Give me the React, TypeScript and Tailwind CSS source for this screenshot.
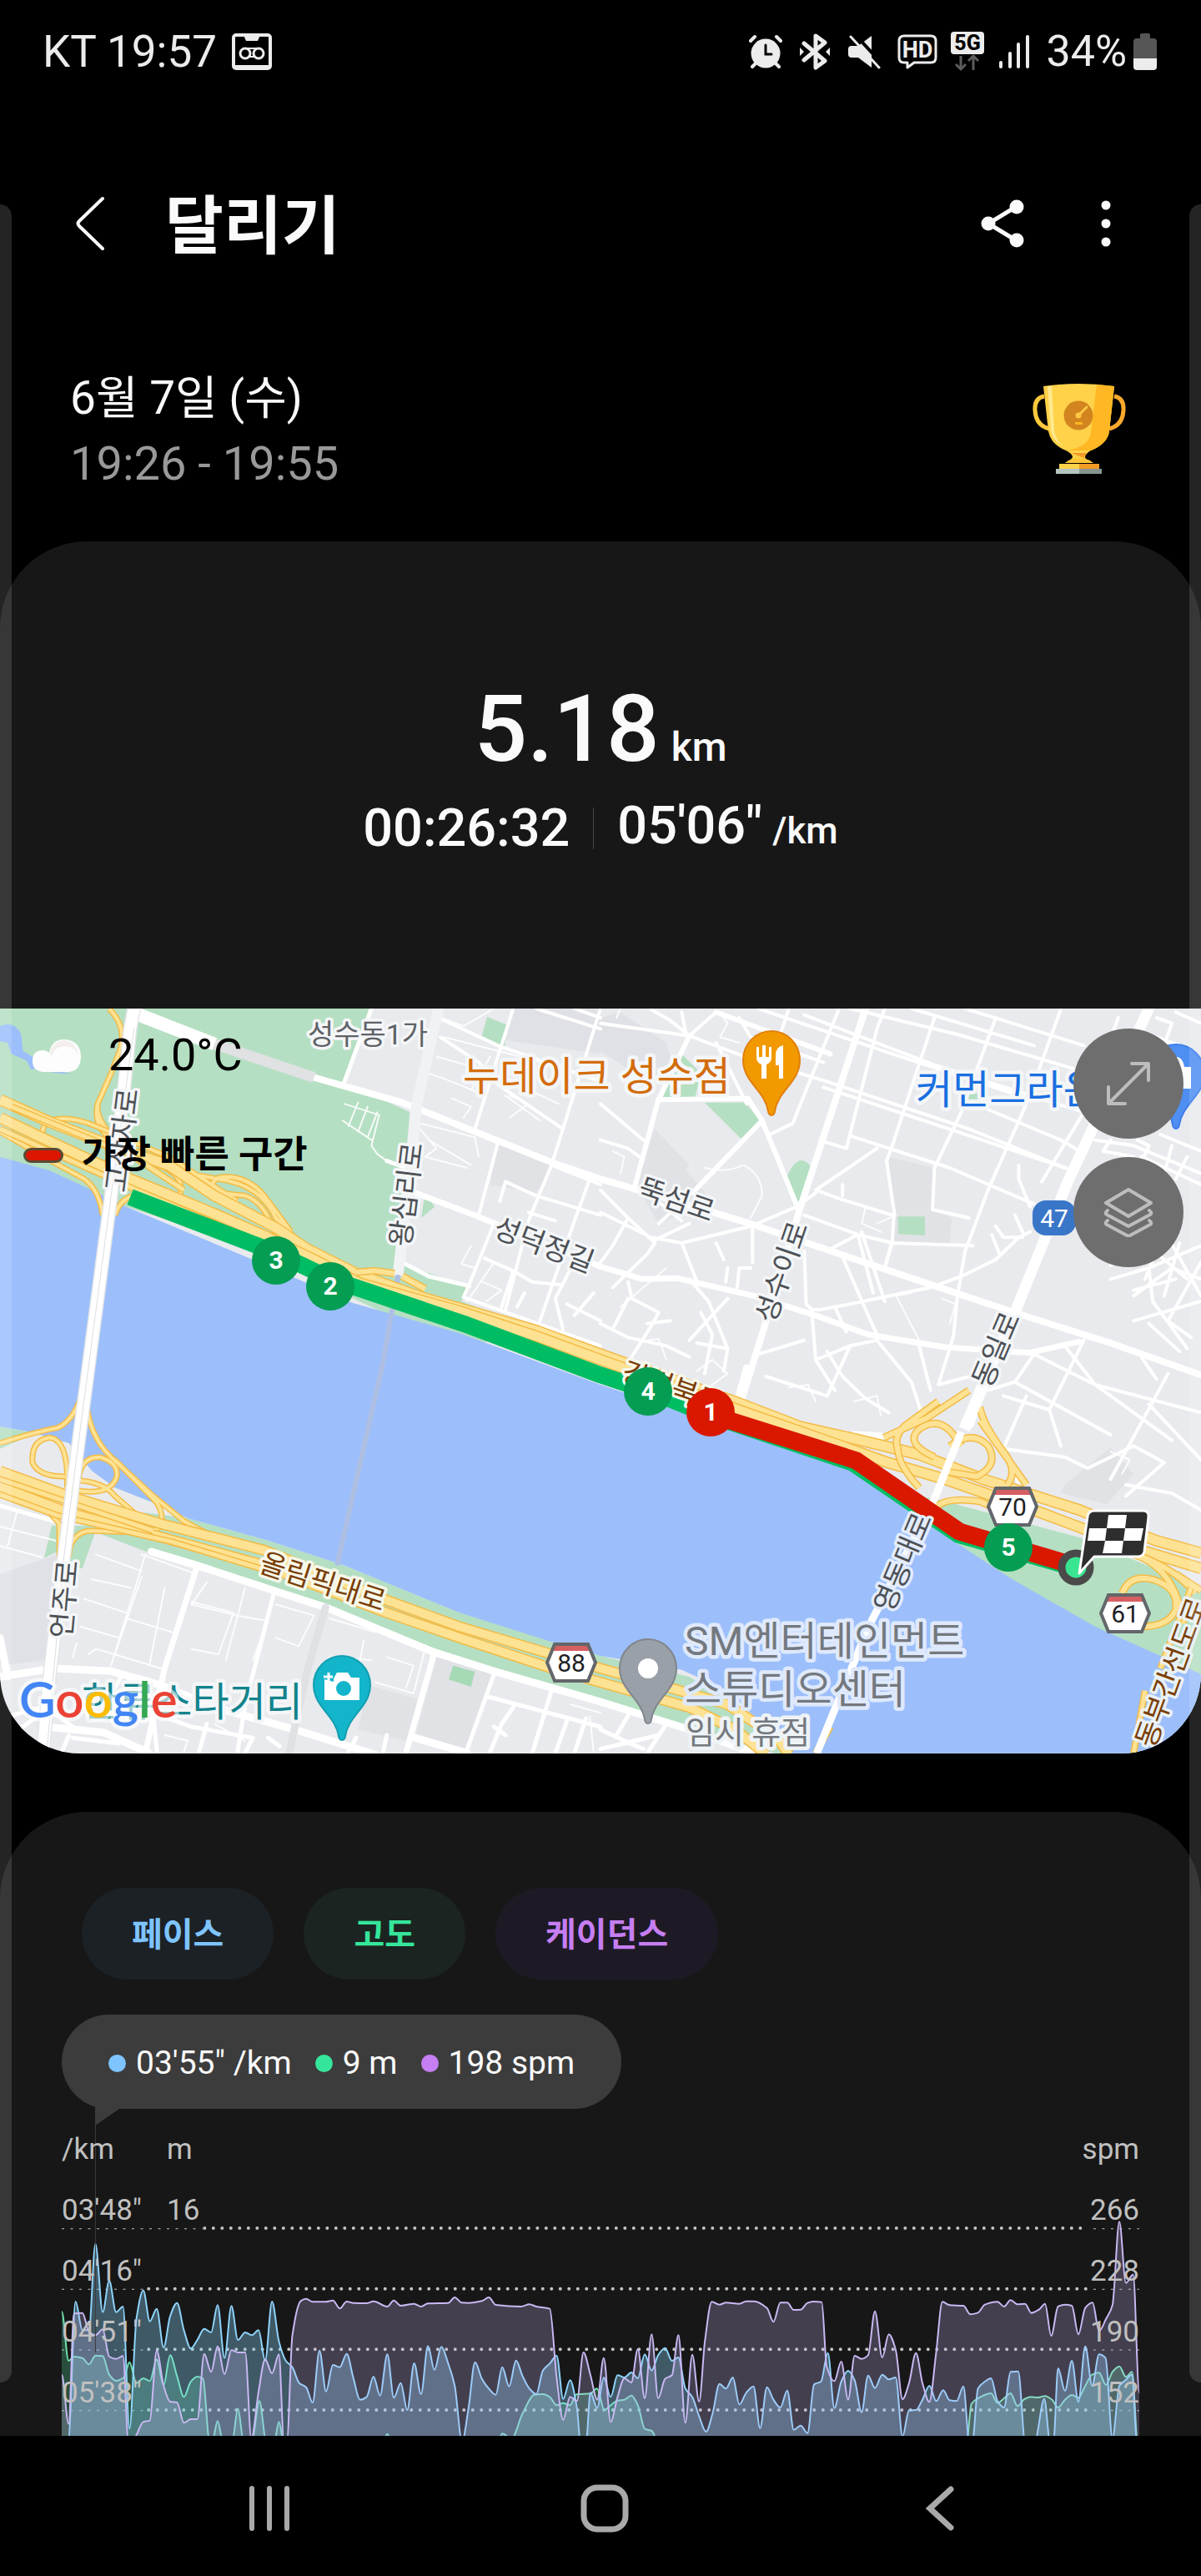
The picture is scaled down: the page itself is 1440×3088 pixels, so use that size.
import type { ReactNode } from "react";

type Point = [number, number];

/* ---------- chart data (x, y in plot units, y grows downwards) ---------- */

const R = 1568;

const pace: Point[] = [
  [161, 1160], [179, 1150], [197, 657], [215, 760], [232, 760], [249, 449], [268, 695], [285, 582], [303, 695], [321, 675],
  [338, 1115], [356, 720], [374, 617], [391, 728], [409, 683], [427, 822], [444, 710], [462, 662], [480, 760], [498, 826],
  [515, 795], [533, 755], [551, 768], [568, 670], [586, 860], [604, 673], [621, 795], [640, 768], [657, 778], [675, 760],
  [692, 870], [710, 657], [728, 800], [746, 870], [763, 893], [781, 950], [799, 965], [816, 1020], [834, 833], [851, 980],
  [869, 885], [887, 893], [905, 845], [922, 930], [940, 1010], [957, 1000], [975, 927], [992, 995], [1011, 847], [1028, 1003],
  [1046, 950], [1063, 1047], [1081, 879], [1099, 990], [1117, 817], [1134, 903], [1152, 820], [1170, 880], [1187, 960], [1206, 1160],
  [1223, 1040], [1240, 875], [1258, 935], [1276, 970], [1294, 992], [1311, 893], [1329, 962], [1347, 869], [1364, 925], [1382, 970],
  [1400, 990], [1417, 905], [1435, 880], [1453, 852], [1470, 1007], [1488, 940], [1506, 1040], [1515, 1160], [1530, 1160], [1541, 985],
  [1559, 1040], [R + 8, 930], [R + 26, 1000], [R + 44, 922], [R + 62, 930], [R + 80, 912], [R + 97, 933], [R + 115, 847],
  [R + 133, 905], [R + 150, 850], [R + 168, 824], [R + 186, 870], [R + 203, 858], [R + 221, 970], [R + 239, 1000], [R + 257, 1070],
  [R + 275, 1125], [R + 292, 1060], [R + 310, 953], [R + 327, 970], [R + 345, 930], [R + 362, 1027], [R + 380, 985], [R + 399, 962],
  [R + 416, 1112], [R + 434, 965], [R + 451, 1010], [R + 469, 1038], [R + 487, 977], [R + 504, 1118], [R + 522, 1103], [R + 540, 1130],
  [R + 557, 955], [R + 575, 945], [R + 593, 842], [R + 610, 1040], [R + 628, 945], [R + 646, 906], [R + 663, 940], [R + 681, 1055],
  [R + 698, 923], [R + 716, 968], [R + 735, 920], [R + 752, 937], [R + 770, 930], [R + 788, 1142], [R + 805, 1048], [R + 823, 1047],
  [R + 840, 1010], [R + 858, 960], [R + 876, 1015], [R + 894, 976], [R + 911, 1012], [R + 929, 1015], [R + 947, 962], [R + 962, 1160],
  [R + 970, 1160], [R + 985, 970], [R + 1003, 945], [R + 1019, 933], [R + 1036, 1015], [R + 1053, 1038], [R + 1070, 910], [R + 1090, 908],
  [R + 1108, 1160], [R + 1133, 1160], [R + 1158, 1007], [R + 1173, 1160], [R + 1182, 1160], [R + 1194, 897], [R + 1212, 978], [R + 1230, 870],
  [R + 1247, 1018], [R + 1265, 818], [R + 1283, 960], [R + 1301, 847], [R + 1318, 860], [R + 1336, 1150], [R + 1354, 960], [R + 1370, 940],
  [R + 1387, 920], [R + 1400, 1160],
];

const elevation: Point[] = [
  [161, 693], [179, 870], [193, 855], [215, 860], [232, 883], [249, 852], [268, 853], [285, 920], [303, 942], [323, 930],
  [338, 875], [356, 950], [374, 933], [391, 943], [409, 865], [427, 958], [444, 850], [462, 925], [480, 1000], [498, 945],
  [515, 927], [530, 935], [547, 1160], [554, 1160], [568, 1087], [582, 1160], [606, 1160], [621, 1042], [636, 1160], [657, 1160],
  [677, 1015], [695, 1160], [716, 1160], [728, 1090], [740, 1160], [1000, 1160], [1011, 1133], [1022, 1160], [1300, 1160], [1311, 1132],
  [1335, 1150], [1364, 1060], [1395, 992], [1417, 990], [1435, 1000], [1453, 1030], [1470, 1022], [1488, 1030], [1506, 990], [1541, 988],
  [1558, 970], [R + 10, 1047], [R + 26, 1030], [R + 44, 1013], [R + 62, 1010], [R + 80, 995], [R + 97, 1030], [R + 115, 1115],
  [R + 133, 1122], [R + 150, 1160], [R + 955, 1160], [R + 968, 1025], [R + 985, 1005], [R + 1019, 987], [R + 1036, 1022], [R + 1053, 1005],
  [R + 1070, 987], [R + 1088, 1033], [R + 1106, 1008], [R + 1124, 1000], [R + 1140, 1002], [R + 1160, 997], [R + 1178, 1010], [R + 1194, 1038],
  [R + 1212, 1010], [R + 1230, 993], [R + 1247, 1003], [R + 1265, 960], [R + 1283, 920], [R + 1301, 913], [R + 1319, 957], [R + 1336, 910],
  [R + 1354, 890], [R + 1371, 928], [R + 1387, 910], [R + 1402, 1160],
];

const cadence: Point[] = [
  [161, 920], [179, 1097], [193, 700], [215, 698], [232, 765], [249, 778], [268, 757], [285, 855], [303, 863], [321, 853],
  [335, 1160], [350, 1150], [374, 1090], [391, 1085], [409, 833], [427, 960], [444, 1017], [462, 1020], [480, 1093], [498, 1080],
  [515, 1080], [533, 845], [551, 910], [568, 818], [586, 918], [604, 832], [621, 840], [640, 840], [656, 1150], [675, 980],
  [692, 865], [710, 915], [728, 847], [741, 1155], [749, 1155], [763, 780], [785, 655], [799, 647], [816, 658], [850, 658],
  [869, 653], [887, 682], [905, 657], [922, 662], [957, 663], [975, 656], [1011, 675], [1028, 653], [1046, 672], [1081, 665],
  [1099, 675], [1117, 664], [1170, 662], [1187, 642], [1205, 661], [1223, 662], [1258, 655], [1276, 642], [1294, 669], [1360, 675],
  [1382, 667], [1400, 675], [1435, 683], [1453, 930], [1470, 1083], [1488, 1000], [1506, 1015], [1523, 840], [1541, 920], [1559, 1010],
  [R + 8, 860], [R + 26, 1090], [R + 44, 1000], [R + 62, 933], [R + 80, 948], [R + 97, 828], [R + 115, 1005], [R + 133, 775],
  [R + 150, 1005], [R + 168, 935], [R + 186, 922], [R + 203, 778], [R + 221, 1093], [R + 239, 848], [R + 257, 1017], [R + 272, 800],
  [R + 290, 658], [R + 310, 668], [R + 327, 661], [R + 362, 665], [R + 380, 656], [R + 400, 656], [R + 434, 680], [R + 451, 730],
  [R + 469, 661], [R + 487, 661], [R + 504, 687], [R + 522, 686], [R + 540, 662], [R + 555, 657], [R + 577, 659], [R + 590, 890],
  [R + 610, 943], [R + 628, 873], [R + 646, 1010], [R + 663, 852], [R + 681, 863], [R + 698, 850], [R + 716, 692], [R + 735, 858],
  [R + 752, 775], [R + 770, 830], [R + 788, 1008], [R + 805, 950], [R + 823, 842], [R + 840, 950], [R + 858, 1018], [R + 875, 850],
  [R + 892, 658], [R + 911, 670], [R + 947, 672], [R + 965, 703], [R + 985, 697], [R + 1003, 668], [R + 1036, 658], [R + 1053, 675],
  [R + 1070, 652], [R + 1088, 667], [R + 1108, 665], [R + 1124, 698], [R + 1145, 685], [R + 1160, 665], [R + 1176, 780], [R + 1194, 675],
  [R + 1212, 668], [R + 1230, 672], [R + 1247, 775], [R + 1265, 680], [R + 1284, 661], [R + 1301, 763], [R + 1319, 720], [R + 1336, 670],
  [R + 1354, 370], [R + 1371, 590], [R + 1390, 560], [R + 1406, 985],
];

/* Monotone cubic curve through the points: peaks stay where the data puts them. */
function curve(points: Point[]): string {
  const slope = (i: number) => (points[i + 1][1] - points[i][1]) / (points[i + 1][0] - points[i][0]);
  const tangent = (i: number) => {
    if (i === 0 || i === points.length - 1) return 0;
    const a = slope(i - 1);
    const b = slope(i);
    return a * b <= 0 ? 0 : (2 * a * b) / (a + b);
  };
  let d = `M${points[0][0]} ${points[0][1]}`;
  for (let i = 0; i < points.length - 1; i++) {
    const [x0, y0] = points[i];
    const [x1, y1] = points[i + 1];
    const h = (x1 - x0) / 3;
    d += `C${x0 + h} ${y0 + tangent(i) * h} ${x1 - h} ${y1 - tangent(i + 1) * h} ${x1} ${y1}`;
  }
  return d;
}

function Series({ points, line, fill, opacity }: { points: Point[]; line: string; fill: string; opacity: number }) {
  const d = curve(points);
  return (
    <>
      <path d={`${d}V1200H161Z`} fill={fill} fillOpacity={opacity} />
      <path d={d} fill="none" stroke={line} strokeWidth="2" vectorEffect="non-scaling-stroke" />
    </>
  );
}

function PlotArea() {
  const rows = [393, 611, 829, 1047];
  return (
    <svg viewBox="161 0 2813 1140" preserveAspectRatio="none" className="absolute inset-0 h-full w-full" aria-hidden="true">
      <g stroke="#c4c4c4" fill="none">
        {rows.map((y, i) => {
          const left = i === 0 ? 528 : 382;
          return (
            <g key={y}>
              <path d={`M161 ${y + 2}H${left}`} strokeWidth="1" strokeDasharray="3 7.5" vectorEffect="non-scaling-stroke" />
              <path d={`M${left + 6} ${y}H2840`} strokeWidth="4" strokeLinecap="round" strokeDasharray="0 10.5" vectorEffect="non-scaling-stroke" />
              <path d={`M2854 ${y + 2}H2974`} strokeWidth="1" strokeDasharray="3 7.5" vectorEffect="non-scaling-stroke" />
            </g>
          );
        })}
      </g>
      <Series points={elevation} line="#6fe3ac" fill="#5fe0a0" opacity={0.28} />
      <Series points={pace} line="#8fd3fb" fill="#89d3f8" opacity={0.35} />
      <Series points={cadence} line="#c9b8f2" fill="#c9b6f5" opacity={0.25} />
      <path d="M249 0V840" stroke="#3c3c3c" strokeWidth="1" vectorEffect="non-scaling-stroke" />
    </svg>
  );
}

/* ---------- map ---------- */

function Roads({ d, w, color = "#ffffff", cap = "round" }: { d: string; w: number; color?: string; cap?: "round" | "butt" }) {
  return <path d={d} fill="none" stroke={color} strokeWidth={w} strokeLinejoin="round" strokeLinecap={cap} vectorEffect="non-scaling-stroke" />;
}

function Cased({ d, w, line = "#f3bb45", color = "#fde293" }: { d: string; w: number; line?: string; color?: string }) {
  return (
    <>
      <Roads d={d} w={w + 3} color={line} cap="butt" />
      <Roads d={d} w={w} color={color} cap="butt" />
    </>
  );
}

function Terrain() {
  return (
    <g transform="scale(0.45918 0.33333) translate(0 -27)">
      <rect x="0" y="27" width="3136" height="2680" fill="#e8eaed" />
      <g fill="#e0e2e6">
        <path d="M1345 27H1568V190L1320 140ZM1300 510L1445 590L1400 690L1280 660ZM1568 60L1620 40L1740 150L1760 250L1700 300L1568 180ZM1710 460L1800 590L1790 610L1860 720L1720 800L1660 660ZM2320 560L2440 600L2440 750L2485 780L2480 880L2335 865Z" />
        <path d="M0 2060L150 1990L120 2370L0 2390ZM1140 2360L1285 2420L1225 2690L1085 2640ZM960 2460L1090 2510L1060 2660L935 2620ZM2900 1605L2960 1700L2890 1810L2770 1770L2780 1740Z" />
      </g>
      <g fill="#b5dfc2">
        <path d="M0 27H965L898 290L1070 400L1035 940L1225 1025L1205 1080L1400 1180L1200 1250L600 860L330 740L240 690L0 570Z" />
        <path d="M1272 57L1322 85L1318 165L1258 125ZM1780 190L1830 260L1815 345L1730 345ZM1840 365H1945L1985 430L1935 495ZM2055 630Q2075 570 2095 573Q2115 580 2120 610L2090 720H2080ZM2530 320L2580 350L2520 355Z" />
        <path d="M2345 775H2415V843L2345 838ZM1110 690L1135 740L1100 780Z" />
        <path d="M2400 1780L2470 1800L2820 1930L3136 2110V2450L2638 2095L2380 1850L2200 1680L2240 1640Z" />
        <path d="M0 1530L90 1555L0 1610ZM135 1887H255L215 2040H185L180 1960L115 2003Z" />
        <path d="M380 1840L490 1860L700 1940L900 2030L1200 2200L1568 2355L1800 2430L1960 2560L2060 2720L1960 2680L1568 2520L1130 2340L860 2190L680 2090L400 1990L250 1910Z" />
        <path d="M1183 2390L1240 2412L1230 2466L1172 2440Z" fill="#a6d9b5" />
      </g>
      <path
        d="M0 560L130 610L240 680L330 740L660 930L920 1085L1200 1195L1568 1380L1908 1535L2218 1680L2388 1850L2638 2075L2860 2250L3136 2420V2705H2060L1990 2600L1900 2480L1780 2405L1568 2355L1430 2300L1200 2200L900 2030L700 1940L490 1860L420 1815L300 1750L240 1690L180 1590L80 1550L0 1530Z"
        fill="#9cbffb"
      />
      <path d="M0 90Q40 70 55 120L60 180L85 200L95 250L190 265L120 240L80 245L70 215L30 190L20 150L0 145Z" fill="#9cbffb" />

      {/* lanes and alleys */}
      <g opacity="0.9">
        <Roads
          w={2}
          d="M1150 60L1210 90L1290 27M1160 130L1330 190L1470 240M1120 260L1180 290L1250 330M1140 200L1270 250M1330 340L1380 370L1330 420M1320 340L1410 430M1350 300L1460 370M1280 200L1230 320M1180 350L1230 380L1210 420M1100 440L1240 490L1250 560M1120 500L1230 590M1090 450L1140 530L1110 560L1220 600M900 370L990 410L970 520M895 430L970 500M935 365L910 450M960 380L935 470M985 400L960 490M970 520L985 550L1010 575M1260 1010L1310 1040L1270 1080M1290 940L1220 1080M1230 880L1205 945L1240 960"
        />
        <Roads
          w={2}
          d="M1740 960L1620 1100M1610 60L1620 27M1880 40L1900 80L1880 130L1930 150M1600 540L1630 560L1620 620M1840 600Q1900 620 1940 590Q1990 620 1990 700L1960 780M2260 740L2250 800L2300 830M2290 800L2340 770M2380 1050L2340 1060L2400 1220M2460 1070L2495 1090L2480 1160M1690 1220L1720 1215L1740 1290M1820 1330L1860 1290L1900 1340L1840 1400M2060 1390L2110 1380L2130 1440M2230 1440L2290 1420L2300 1490M2900 1620L2950 1650L2930 1700"
        />
        <Roads
          w={2}
          d="M380 1990L290 2390M370 1990L510 2060M250 1990L370 2050M240 2080L340 2110M220 2150L330 2200M210 2250L310 2290M370 2070L300 2350L420 2400M430 2110L390 2390M540 2090L500 2170L620 2210L700 2230M640 2110L590 2370M500 2160L610 2200L570 2350L500 2330M330 2220L450 2270M700 2230L660 2370M720 2170L820 2210L780 2320L720 2290M860 2220L980 2270M990 2270L1110 2330L1080 2490L980 2450M860 2360L970 2370M950 2300L930 2440M1010 2360L1080 2390L1060 2470"
        />
        <Roads w={2} d="M0 1890L145 1940M0 1960L110 2000M45 1835L20 1960M190 2360L200 2310M230 2350L250 2330L300 2350M640 2660L560 2600M430 2640L490 2660L480 2700M1490 2530L1568 2560M1540 2570L1550 2700" />
      </g>

      {/* side streets */}
      <Roads
        w={4}
        d="M1145 60L1300 160L1568 290M1150 130L1250 220L1300 300L1470 460M1340 27L1300 200L1240 460M1400 27L1568 100M1568 27L1470 460L1440 590L1380 790L1320 1110M1300 510L1250 770M1440 590L1568 660M1540 640L1500 790L1410 1150M1320 650L1400 700L1568 770M1320 650L1305 720M1380 760L1450 790M1290 800L1225 1020L1210 1065L1568 1240M1265 925L1340 970L1390 1010L1460 1020M1510 910L1450 1070L1470 1180M1480 1090L1568 1150M1340 970L1310 1100M1550 1050L1500 1130M1370 1050L1350 1100"
      />
      <Roads
        w={4}
        d="M1568 80L1800 125L1935 195L2160 290L2530 460L2800 610M1700 30L1750 70L1800 125L1870 40M1780 40L1790 110M1930 60L1960 130L2150 220M1980 27L2330 190L2640 330M2100 50L2440 230L2830 400M2220 27L2500 120L2820 250M2380 27L2700 160M2520 27L2830 160M2150 310L2500 470L2780 600M2220 485L2480 600L2700 730M2580 390L2770 500L2820 540M2150 505L2210 530L2290 100L2310 27M2260 50L2140 510M2440 60L2330 520L2315 575L2335 760L2330 860L2310 960M2600 60L2510 400L2440 600L2435 750L2530 780M2770 30L2680 370L2580 680L2520 900L2500 1060M2920 60L2830 400L2720 650M2660 590L2660 640L2690 740M1870 150L1950 370M2060 27L2030 150L1990 330M2190 30L2070 440L2010 480M1568 500L1640 530L1680 570M1568 370L1680 500M2130 680L2190 710L2330 770M2130 680L2290 530M2200 660L2200 700"
      />
      <Roads
        w={4}
        d="M1568 760L1700 850L1780 870L1960 810L2080 740L2130 690M1700 700L1780 790M1760 750L1720 800M1710 860L1800 800M1780 870L1820 1010M1870 870L1890 930M1965 820L1965 940M1568 680L1640 780L1710 870L1690 910L1600 1030M1640 780L1600 880L1568 940M1900 960L1895 1010M1930 960L1925 1030M1930 960H1960M1800 1000L1850 1080L1900 1250M1640 1010L1650 1070L1720 1120L1700 1170L1640 1300M1600 1180L1640 1070M1690 1160L1750 1150M1568 1160L1640 1210L1740 1240L1800 1280M1830 1120L1860 1200L1840 1340M1900 1070L1800 1220M1820 1230L1900 1250L1890 1330"
      />
      <Roads
        w={4}
        d="M2100 770L2240 840L2330 870L2540 880M2240 840L2170 890M2200 920L2270 1140L2290 1200M2240 840L2280 1050M2250 830L2310 1080M2100 900L2105 1090L2120 1110L2140 1110L2220 1090L2430 1030L2510 990L2600 930L2660 850L2690 830M2500 1060L2490 1200L2480 1250M2310 960L2330 870M2600 810L2620 850L2670 850M2590 840L2610 910M2650 770L2670 830M2120 1120L2130 1290L2220 1240L2290 1220M2130 1290L2180 1400M2160 1260L2200 1350L2260 1430L2320 1480M1980 1270L2100 1220M2290 1220L2380 1370L2410 1500M2400 1240L2430 1400M2480 1250L2450 1380L2560 1340M2220 1240L2160 1420L2000 1350M2180 1100L2210 1190"
      />
      <Roads
        w={4}
        d="M2700 1270L2650 1370L2900 1560M2650 1370L2580 1400M2700 1270L2860 1380L2940 1460L3060 1580M2780 1240L2860 1380L3136 1480M2830 1220L2740 1470L2770 1600M2620 1420L2740 1470M2680 1420L2620 1610L2780 1640L2840 1680L2960 1600L3040 1660L2940 1780M3050 1340L2900 1720M2620 1610L2680 1800M2940 1740L3060 1770L3136 1830M3000 1450L3136 1650M2980 1280L3020 1360M2900 1000L3000 960L3136 880M2960 1040L3070 1000M3000 960L3010 1080L3100 1250M2960 1150L3136 1080M3020 900L2990 1000M3050 850L3136 1060M3080 870L3040 1060M2900 950L2980 860L3100 1000M2960 1060L3060 960L3136 1000M3000 1160L3080 1260M3136 940L3050 1150L3110 1210"
      />
      <Roads w={4} d="M2860 500L2960 520L3136 620M2900 500L2880 540L2960 560M2970 500L3000 520L2980 580M3030 480L3136 540M2980 560L3136 660M3060 520L3040 620M3100 560L3070 640M3000 120L3080 160M3020 60L3060 80L3040 160M3070 40L3136 80" />
      <Roads
        w={5}
        d="M715 2130L640 2530L620 2705M0 2580L110 2540M0 2670L110 2560M120 2540L200 2620M400 2560L500 2610L660 2650L640 2705M400 2560L410 2705M540 2600L520 2700M180 2640L160 2705M190 2650L310 2670M730 2680L700 2650M1290 2420L1220 2690M1440 2480L1390 2705M1270 2500L1568 2610M1340 2540L1310 2600L1280 2700M1480 2590L1450 2705M1530 2580L1500 2705M1568 2620L1630 2660L1680 2690M1640 2570L1610 2640M1568 2690L1720 2640M1740 2600L1690 2705M320 2420L300 2470M910 2700L930 2650M1010 2640L1000 2705M1290 2610L1320 2640"
      />
      <Roads w={9} d="M395 1980L515 2030L715 2120L850 2180L1130 2340L1290 2410L1568 2520L1800 2620L1960 2700" />
      <Roads w={7} d="M515 2030L430 2400L380 2700M1135 2340L1060 2705" />
      <Roads w={9} d="M0 2430L140 2400L290 2410L420 2460L560 2540L770 2620L980 2710M0 2290L20 2430M120 2610L270 2630L390 2705M1085 2650L1220 2705" />
      <Roads w={9} color="#dfe1e5" d="M850 2180L800 2420L755 2705" />
      <Roads w={5} d="M0 1815L140 1870" />

      {/* avenues */}
      <Roads w={5} d="M970 27L898 295M1225 1025L1120 990L1050 940M1010 575L1060 600" />
      <Roads w={8} d="M820 275L1050 365L1440 580L1568 640L1668 680L1958 800L2268 945L2648 1120L2900 1230L3136 1345" />
      <Roads w={7} d="M1085 690L1240 770L1300 805L1568 955L1678 1000L1768 997L1968 1060L2128 1130L2268 1200L2468 1245L2688 1265L2818 1225" />
      <Roads w={6} d="M1800 125L1718 360L1655 680M1718 355L1953 350L1990 430L1808 690M1990 430L2085 750M1870 40L1968 90L2168 190" />
      <Roads w={8} d="M2260 27L2088 750L2010 1110L1935 1440" />
      <Roads w={4} d="M1500 27L1568 60M3000 27L2980 60" />
      <Roads w={13} d="M3000 27L2788 650L2718 890L2650 1120L2560 1400L2530 1520" />
      <Roads w={13} color="#f1f2f4" d="M1145 27L1088 370L1078 520L1040 975" />
      <Roads w={13} color="#e0e1e3" d="M540 145L820 275" cap="butt" />
      <Roads w={16} d="M345 40L420 80L560 155" cap="butt" />
      <Roads w={9} d="M1950 1320L1930 1420M2230 1560L2300 1565" />
      <Roads w={6} color="#aebfe3" d="M1040 985L1000 1300L880 2030" cap="butt" />

      {/* expressways */}
      <Cased w={4} d="M285 27Q330 90 315 170L290 260L255 370Q240 450 300 510L420 590M255 370Q250 420 290 480" />
      <Cased w={4} d="M130 430Q180 410 250 450L440 560L620 720M340 560L430 600Q490 640 465 715M510 625L570 640Q680 660 720 780L790 880M720 840Q690 720 640 700L570 690Q540 660 570 635Q640 620 690 700L760 830M105 490L120 430M0 470L140 580L220 640Q260 680 268 770M300 770Q310 720 345 700L380 690" />
      <Cased w={11} d="M0 355L130 435L300 525L440 590L560 700L720 815L800 890L930 980L1100 1065L1400 1185L1568 1270L1918 1440L2088 1530L2248 1580L2398 1630L2568 1720L2818 1830L3018 1940L3136 1985" />
      <Cased w={11} d="M0 420L100 485L340 640L560 765L700 850L820 930L940 1015L1200 1115L1400 1205L1568 1290L1968 1490L2208 1605L2318 1660L2468 1720L2718 1840L2968 1970L3136 2040" />
      <Cased w={5} d="M0 460L340 670L700 880M30 380L350 560L480 680" />
      <Cased w={6} d="M930 975L980 970L1030 980M1050 990L1110 1035M2308 1570L2420 1500L2530 1400M2345 1620Q2330 1560 2370 1520L2450 1440M2440 1640Q2360 1590 2400 1540Q2450 1490 2490 1560L2510 1600M2480 1600Q2540 1540 2580 1600Q2610 1670 2550 1710L2460 1690M2558 1460Q2570 1530 2620 1620Q2660 1690 2630 1740M2560 1510L2680 1740M2345 1600Q2340 1660 2400 1750M2440 1830Q2460 1780 2560 1800L2640 1850" />
      <Cased w={6} d="M2930 2130Q2950 2060 3010 2080Q3080 2110 3070 2190Q3050 2250 2980 2250M2960 1990Q3070 2040 3090 2240M2900 1960Q3060 2020 3120 2130M3136 2120L3070 2060" />
      <Cased w={4} d="M0 1590Q90 1550 150 1535Q190 1510 210 1430M225 1430Q230 1560 290 1640L400 1780L480 1870L560 1930M175 1750Q180 1580 130 1570Q80 1580 85 1660Q100 1710 170 1710M205 1720Q210 1640 260 1640Q310 1660 305 1710Q290 1780 200 1760M210 1725Q270 1730 300 1780L350 1840M300 1650L400 1790Q430 1830 420 1890L395 1910M155 2000V1880L130 1840L0 1760M180 2000Q180 1920 230 1905L350 1910" />
      <Cased w={10} d="M0 1690L180 1780L420 1880L690 1975L1000 2150L1200 2250L1430 2345L1568 2400L1750 2470L1900 2530L2030 2650L2060 2710" />
      <Cased w={10} d="M0 1745L180 1840L400 1920L680 2025L1000 2195L1200 2290L1430 2395L1568 2450L1800 2540L1920 2620L2000 2710" />
      <Cased w={5} d="M0 1720L400 1905M0 1775L150 1850L450 1945L690 2045" />
      <Cased w={5} d="M2130 2705L2168 2610M2990 2480L2960 2705M3110 2110L3030 2400" />

      {/* bridges */}
      <Cased w={14} color="#ffffff" line="#e3e5e8" d="M350 27L340 100L325 300L290 700L225 1380L200 1640L165 2020L130 2420L112 2705" />
      <Roads w={1} color="#dadde1" d="M350 100L290 700L225 1380L200 1640L165 2020L122 2705" />
      <Roads w={14} d="M2568 1380L2518 1540" cap="butt" />
      <Roads w={9} d="M2510 1550L2440 1790L2268 2250L2133 2705" cap="butt" />

      {/* recorded route */}
      <Roads w={20} color="#00bd63" d="M340 705L720 905L864 1000L1210 1160L1568 1345L1700 1405L1855 1490L2225 1660L2503 1920L2809 2040" cap="butt" />
      <Roads w={21} color="#da1800" d="M1855 1485L1908 1510L2235 1652L2505 1908L2809 2032" cap="butt" />
    </g>
  );
}

function RoadName({ x, y, turn = 0, children, color = "#4d5156", halo = "#f4f6f8", size = 34 }: { x: number; y: number; turn?: number; children: string; color?: string; halo?: string; size?: number }) {
  return (
    <text
      x={x}
      y={y + size / 3}
      transform={`rotate(${turn} ${x} ${y})`}
      textAnchor="middle"
      fontSize={size}
      fill={color}
      stroke={halo}
      strokeWidth="7"
      strokeLinejoin="round"
      paintOrder="stroke"
    >
      {children}
    </text>
  );
}

function Place({ x, y, children, color, halo = "#f4f6f8", size = 48 }: { x: number; y: number; children: string; color: string; halo?: string; size?: number }) {
  return (
    <text x={x} y={y} fontSize={size} fill={color} stroke={halo} strokeWidth="9" strokeLinejoin="round" paintOrder="stroke">
      {children}
    </text>
  );
}

function Pin({ x, y, color, edge, children }: { x: number; y: number; color: string; edge: string; children?: ReactNode }) {
  return (
    <g transform={`translate(${x} ${y})`}>
      <path d="M0 66C-2 66-4 64-4 61C-8 36-34 26-34 0A34 35 0 0 1 34 0C34 26 8 36 4 61C4 64 2 66 0 66Z" fill={color} stroke={edge} strokeWidth="2" />
      {children}
    </g>
  );
}

function Shield({ x, y, children }: { x: number; y: number; children: string }) {
  return (
    <g transform={`translate(${x} ${y})`}>
      <path d="M-21-23H21L30 0L21 23H-21L-30 0Z" fill="#ffffff" />
      <path d="M-21-23H21L25-14H-25Z" fill="#d65f62" />
      <path d="M-20-22H20L29 0L20 22H-20L-29 0Z" fill="none" stroke="#63666a" strokeWidth="4" />
      <text x="0" y="11" fontSize="30" textAnchor="middle" fill="#202124">
        {children}
      </text>
    </g>
  );
}

function Kilometre({ x, y, color = "#049d52", children }: { x: number; y: number; color?: string; children: string }) {
  return (
    <g>
      <circle cx={x} cy={y} r="29" fill={color} />
      <text x={x} y={y + 10} fontSize="30" fontWeight="700" textAnchor="middle" fill="#ffffff">
        {children}
      </text>
    </g>
  );
}

function RouteMap() {
  return (
    <svg viewBox="0 0 1440 893" className="block h-auto w-full" role="img" aria-label="달리기 경로 지도">
      <Terrain />
      <RoadName x={441} y={32} color="#5f6368">성수동1가</RoadName>
      <RoadName x={147} y={158} turn={-83}>고산자로</RoadName>
      <RoadName x={488} y={223} turn={-83}>왕십리로</RoadName>
      <RoadName x={652} y={284} turn={21}>성덕정길</RoadName>
      <RoadName x={811} y={230} turn={19}>뚝섬로</RoadName>
      <RoadName x={938} y={316} turn={-71}>성수이로</RoadName>
      <RoadName x={1195} y={409} turn={-67}>동일로</RoadName>
      <RoadName x={1083} y={664} turn={-67} halo="#e3ecfd">영동대로</RoadName>
      <RoadName x={78} y={708} turn={-85}>언주로</RoadName>
      <RoadName x={387} y={688} turn={18} color="#7a3e05" halo="#f6f8ea">올림픽대로</RoadName>
      <RoadName x={806} y={455} turn={19} color="#7a3e05" halo="#f6f8ea">강변북로</RoadName>
      <RoadName x={1405} y={796} turn={-70} color="#7a3e05" halo="#e9f1f4">동부간선도로</RoadName>

      <Place x={555} y={98} color="#d36c0b">누데이크 성수점</Place>
      <Place x={1098} y={114} color="#1a6fe0">커먼그라운드</Place>
      <Place x={821} y={775} color="#74797f" halo="#dfe9fc">SM엔터테인먼트</Place>
      <Place x={821} y={833} color="#74797f" halo="#dfe9fc">스튜디오센터</Place>
      <Place x={822} y={881} color="#74797f" halo="#eef3f6" size={38}>임시 휴점</Place>
      <Place x={98} y={848} color="#12838c">한류스타거리</Place>

      <Pin x={925} y={62} color="#f29900" edge="#e07f0a">
        <path d="M-18-16V-4Q-18 3-12 5V22H-6V5Q0 3 0-4V-16H-3V-4H-7V-18H-11V-4H-15V-16ZM14-18Q5-16 5-6V6H9V22H14Z" fill="#ffffff" />
      </Pin>
      <Pin x={410} y={811} color="#13b5cb" edge="#129eaf">
        <path d="M-21-7V18H21V-9H11L7-15H-6L-10-8V-4Z" fill="#ffffff" />
        <path d="M-22-10H-11M-16-15V-4" stroke="#ffffff" strokeWidth="3" />
        <circle cx="2" cy="4" r="9" fill="#13b5cb" />
      </Pin>
      <Pin x={777} y={791} color="#9aa0a8" edge="#80868c">
        <circle cx="0" cy="0" r="12" fill="#ffffff" />
      </Pin>
      <Pin x={1410} y={78} color="#4f8ff2" edge="#3b7ded">
        <path d="M-14-10V18H18V-8H10Q8-20 0-20Q-8-20-9-10Z" fill="#ffffff" />
      </Pin>

      <rect x="1238" y="230" width="52" height="42" rx="16" fill="#3a76c8" />
      <text x="1264" y="262" fontSize="30" textAnchor="middle" fill="#ffffff">47</text>
      <Shield x={685} y={784}>88</Shield>
      <Shield x={1214} y={597}>70</Shield>
      <Shield x={1349} y={725}>61</Shield>

      <Kilometre x={331} y={302}>3</Kilometre>
      <Kilometre x={396} y={333}>2</Kilometre>
      <Kilometre x={777} y={459}>4</Kilometre>
      <Kilometre x={852} y={484} color="#da1800">1</Kilometre>
      <Kilometre x={1209} y={646}>5</Kilometre>

      <circle cx="1290" cy="670" r="17" fill="#3ae592" stroke="#4a4a4a" strokeWidth="9" />
      <path d="M1294 677L1304 609Q1305 602 1312 602H1370Q1378 602 1377 610L1372 651Q1371 657 1364 657H1312Z" fill="#2e2e2e" stroke="#ffffff" strokeWidth="3" strokeLinejoin="round" />
      <path d="M1329 607H1351L1349 623H1371L1368 638H1347L1345 653H1322L1325 638H1304L1306 623H1327ZM1327 623L1325 638H1347L1349 623Z" fill="#ffffff" fillRule="evenodd" />

      <text x="23" y="850" fontSize="60" fontFamily="Lato, sans-serif" fontWeight="600" stroke="#ffffff" strokeOpacity="0.6" strokeWidth="9" strokeLinejoin="round" paintOrder="stroke">
        <tspan fill="#4285f4">G</tspan>
        <tspan fill="#ea4335">o</tspan>
        <tspan fill="#fbbc05">o</tspan>
        <tspan fill="#4285f4">g</tspan>
        <tspan fill="#34a853">l</tspan>
        <tspan fill="#ea4335">e</tspan>
      </text>
    </svg>
  );
}

/* ---------- icons ---------- */

function CassetteIcon() {
  return (
    <svg viewBox="0 0 48 44" className="h-11 w-12" aria-hidden="true">
      <rect x="2" y="2" width="44" height="40" rx="3" fill="none" stroke="#ececec" strokeWidth="4" />
      <path d="M14 2H34L31 9H17ZM2 38H46V42H2Z" fill="#ececec" />
      <g fill="none" stroke="#ececec" strokeWidth="3">
        <circle cx="16" cy="24" r="6" />
        <circle cx="32" cy="24" r="6" />
        <path d="M14 18H34M20 28H28" strokeWidth="2" />
      </g>
    </svg>
  );
}

function AlarmIcon() {
  return (
    <svg viewBox="0 0 40 42" className="h-[42px] w-10" aria-hidden="true">
      <circle cx="20" cy="23" r="17.5" fill="#ececec" />
      <path d="M2 8L7 3M38 8L33 3M8 35L4 39M32 35L36 39" stroke="#ececec" strokeWidth="4" strokeLinecap="round" />
      <path d="M20 13V24H27" fill="none" stroke="#000" strokeWidth="3" strokeLinecap="round" />
    </svg>
  );
}

function BluetoothIcon() {
  return (
    <svg viewBox="0 0 38 44" className="h-11 w-[38px]" aria-hidden="true">
      <path d="M6 12L31 33L20 41V3L31 11L6 32" fill="none" stroke="#ececec" strokeWidth="5" strokeLinejoin="round" strokeLinecap="round" />
      <path d="M1 17L6 22L1 27ZM37 17L32 22L37 27Z" fill="#ececec" />
    </svg>
  );
}

function MuteIcon() {
  return (
    <svg viewBox="0 0 40 42" className="h-[42px] w-10" aria-hidden="true">
      <path d="M29 2V40L13 28H5Q1 28 1 24V18Q1 14 5 14H13Z" fill="#ececec" />
      <path d="M8 -1L43 37" stroke="#000" strokeWidth="4" />
      <path d="M4 3L38 40" stroke="#ececec" strokeWidth="3" strokeLinecap="round" />
    </svg>
  );
}

function HdIcon() {
  return (
    <svg viewBox="0 0 48 42" className="h-[42px] w-12" aria-hidden="true">
      <path d="M8 2H40Q46 2 46 8V28Q46 34 40 34H20L12 40V34H8Q2 34 2 28V8Q2 2 8 2Z" fill="none" stroke="#ececec" strokeWidth="3" strokeLinejoin="round" />
      <text x="24" y="28" fontSize="27" fontWeight="700" textAnchor="middle" fill="#ececec">HD</text>
    </svg>
  );
}

function FiveGIcon() {
  return (
    <svg viewBox="0 0 40 48" className="h-12 w-10" aria-hidden="true">
      <rect x="0" y="0" width="40" height="27" rx="4" fill="#ececec" />
      <text x="20" y="22" fontSize="25" fontWeight="800" textAnchor="middle" fill="#000">5G</text>
      <path d="M12 29V44M6 39L12 45L18 39M27 46V31M21 35L27 29L33 35" fill="none" stroke="#5c5c5c" strokeWidth="3" />
    </svg>
  );
}

function SignalIcon() {
  return (
    <svg viewBox="0 0 36 42" className="h-[42px] w-9" aria-hidden="true">
      <path d="M2 34V39M13 23V39M23 12V39M34 3V39" stroke="#ececec" strokeWidth="4" strokeLinecap="round" />
    </svg>
  );
}

function BatteryIcon() {
  return (
    <svg viewBox="0 0 28 44" className="h-11 w-7" aria-hidden="true">
      <path d="M10 0H18Q20 0 20 2V6H24Q28 6 28 10V30H0V10Q0 6 4 6H8V2Q8 0 10 0Z" fill="#565656" />
      <path d="M0 30H28V40Q28 44 24 44H4Q0 44 0 40Z" fill="#ececec" />
    </svg>
  );
}

function TrophyIcon() {
  return (
    <svg viewBox="0 0 112 108" className="h-[108px] w-28" role="img" aria-label="최고 기록 트로피">
      <g fill="none" strokeWidth="5">
        <path d="M14 15Q2 17 3 32Q4 50 20 54" stroke="#fdc93c" />
        <path d="M98 15Q110 17 109 32Q108 50 92 54" stroke="#fba92c" />
      </g>
      <path d="M13 3Q55-3 98 3L92 57Q90 72 70 80Q63 84 63 88Q63 91 72 95H39Q47 91 48 88Q48 84 40 80Q22 73 19 57Z" fill="#ffd24a" />
      <path d="M77 1L98 3L92 57Q90 72 70 80H40Q68 76 70 58Z" fill="#ffb724" />
      <path d="M18 3H23L26 56Q28 68 37 75Q24 68 22 56Z" fill="#ffe98e" />
      <path d="M46 83H66Q62 86 62 89Z" fill="#f49a26" />
      <path d="M39 95Q44 91 50 89H61Q68 91 73 95Z" fill="#ffc638" />
      <rect x="32" y="96" width="24" height="7" fill="#ffd24a" />
      <rect x="56" y="96" width="24" height="7" fill="#f49a26" />
      <rect x="28" y="102" width="28" height="6" fill="#b4c4bf" />
      <rect x="56" y="102" width="27" height="6" fill="#87958f" />
      <circle cx="55" cy="38" r="17.5" fill="#d2851f" />
      <path d="M55 38L65 28" stroke="#ffc844" strokeWidth="3" strokeLinecap="round" />
      <circle cx="55" cy="38" r="3.5" fill="#ffc844" />
      <rect x="51" y="46" width="9" height="3" rx="1" fill="#ffb724" />
    </svg>
  );
}

function CloudIcon() {
  return (
    <svg viewBox="0 0 60 40" className="h-10 w-[60px]" aria-hidden="true">
      <path d="M14 40Q1 39 1 27Q1 15 12 14Q18 14 21 17Q24 1 39 1Q58 2 59 21Q59 39 44 40Z" fill="#fdfdfd" />
      <path d="M22 17Q25 4 39 2Q54 4 56 20Q50 8 39 9Q27 10 24 22Z" fill="#f3efec" />
    </svg>
  );
}

/* ---------- page ---------- */

function StatusBar() {
  return (
    <div className="flex h-[124px] items-center justify-between pr-[53px] pl-[51px] text-[52px] leading-none text-[#ececec]">
      <div className="flex items-center gap-[18px] text-[53px]">
        <span>KT 19:57</span>
        <CassetteIcon />
      </div>
      <div className="flex items-center">
        <div className="mr-5 flex items-center gap-5">
          <AlarmIcon />
          <BluetoothIcon />
          <MuteIcon />
          <HdIcon />
        </div>
        <div className="mr-5 -ml-1 flex items-center gap-[18px]">
          <FiveGIcon />
          <SignalIcon />
        </div>
        <span className="mr-2">34%</span>
        <BatteryIcon />
      </div>
    </div>
  );
}

function AppBar() {
  return (
    <header className="flex h-[288px] items-center justify-between pr-[84px] pl-[84px]">
      <div className="flex items-center gap-[66px]">
        <button type="button" aria-label="뒤로" className="flex h-20 w-[48px] items-center">
          <svg viewBox="0 0 48 68" className="h-[68px] w-12" aria-hidden="true">
            <path d="M39 4L11 31Q8 34 11 37L39 64" fill="none" stroke="#fafafa" strokeWidth="4" strokeLinecap="round" />
          </svg>
        </button>
        <h1 className="pt-2 text-[76px] leading-none font-bold text-[#fafafa]">달리기</h1>
      </div>
      <div className="flex items-center gap-[68px]">
        <button type="button" aria-label="공유" className="flex h-20 items-center">
          <svg viewBox="0 0 52 58" className="h-[58px] w-[52px]" aria-hidden="true">
            <path d="M42 9L9 29L42 49" fill="none" stroke="#fafafa" strokeWidth="5" />
            <g fill="#fafafa">
              <circle cx="43" cy="9" r="8.5" />
              <circle cx="9" cy="29" r="8.5" />
              <circle cx="43" cy="49" r="8.5" />
            </g>
          </svg>
        </button>
        <button type="button" aria-label="옵션 더보기" className="flex h-20 w-[60px] items-center justify-center">
          <svg viewBox="0 0 12 58" className="h-[58px] w-3" fill="#fafafa" aria-hidden="true">
            <circle cx="6" cy="7" r="5.5" />
            <circle cx="6" cy="29" r="5.5" />
            <circle cx="6" cy="51" r="5.5" />
          </svg>
        </button>
      </div>
    </header>
  );
}

function MapCard() {
  const control = "flex size-[132px] items-center justify-center rounded-full bg-[#6e6e6e]";
  return (
    <div className="relative overflow-hidden rounded-b-[96px]">
      <RouteMap />
      <div className="absolute top-[26px] left-[38px] flex items-center gap-8 text-[54px] leading-[60px] text-black">
        <CloudIcon />
        <span>24.0°C</span>
      </div>
      <div className="absolute top-[146px] left-[28px] flex items-center gap-[22px] text-[45px] leading-[60px] font-bold text-black">
        <span className="h-[18px] w-[48px] rounded-full border-[3px] border-[#5a4a33] bg-[#dc1600]" />
        <span>가장 빠른 구간</span>
      </div>
      <div className="absolute top-6 right-[21px] flex flex-col gap-[22px]">
        <button type="button" aria-label="지도 확대" className={control}>
          <svg viewBox="0 0 54 54" className="size-[54px]" aria-hidden="true">
            <path d="M4 50L50 4M31 3H51V23M3 31V51H23" fill="none" stroke="#bdbdbd" strokeWidth="4" strokeLinecap="round" strokeLinejoin="round" />
          </svg>
        </button>
        <button type="button" aria-label="지도 유형" className={control}>
          <svg viewBox="0 0 60 60" className="size-[60px]" aria-hidden="true">
            <path d="M30 3L57 19L30 35L3 19ZM5 28Q1 31 4 33L30 47L56 33Q59 31 55 28M5 40Q1 43 4 45L30 59L56 45Q59 43 55 40" fill="none" stroke="#bdbdbd" strokeWidth="4" strokeLinecap="round" strokeLinejoin="round" />
          </svg>
        </button>
      </div>
    </div>
  );
}

function ChartLabel({ left, mid, right }: { left: string; mid?: string; right: string }) {
  return (
    <div className="flex h-[73px] items-center">
      <span className="w-[126px]">{left}</span>
      <span>{mid}</span>
      <span className="ml-auto">{right}</span>
    </div>
  );
}

function ChartCard() {
  const pill = "h-[110px] rounded-full px-[60px] pt-1 text-[40px] leading-none font-bold";
  return (
    <section className="overflow-hidden rounded-t-[104px] bg-[#171717] px-[74px] pt-[91px]">
      <div className="flex gap-9 pl-6">
        <button type="button" className={`${pill} bg-[#1c2125] text-[#7ec4ff]`}>페이스</button>
        <button type="button" className={`${pill} bg-[#1b2421] text-[#35e59b]`}>고도</button>
        <button type="button" className={`${pill} bg-[#1e1a25] text-[#c67ef2]`}>케이던스</button>
      </div>

      <div className="relative mt-[42px] flex h-[113px] w-fit items-center gap-7 rounded-full bg-[#3c3c3c] px-[56px] pt-1 text-[39px] leading-none text-[#fafafa]">
        <span className="flex items-center gap-3">
          <span className="size-[21px] rounded-full bg-[#7ec4ff]" />
          03'55" /km
        </span>
        <span className="flex items-center gap-3">
          <span className="size-[21px] rounded-full bg-[#35e59b]" />9 m
        </span>
        <span className="flex items-center gap-3">
          <span className="size-[21px] rounded-full bg-[#c67ef2]" />
          198 spm
        </span>
        <svg viewBox="0 0 32 22" className="absolute top-full left-10 -mt-[2px] h-[22px] w-8" aria-hidden="true">
          <path d="M0 0H32L0 22Z" fill="#3c3c3c" />
        </svg>
      </div>

      <div className="relative mt-3 h-[380px] overflow-hidden text-[35px] leading-none text-[#c0c0c0]">
        <PlotArea />
        <div className="relative">
          <ChartLabel left="/km" mid="m" right="spm" />
          <ChartLabel left={`03'48"`} mid="16" right="266" />
          <ChartLabel left={`04'16"`} right="228" />
          <ChartLabel left={`04'51"`} right="190" />
          <ChartLabel left={`05'38"`} right="152" />
        </div>
      </div>
    </section>
  );
}

function NavigationBar() {
  return (
    <nav className="grid h-[168px] grid-cols-3 place-items-center pt-1.5 pr-[112px] pl-[122px]">
      <button type="button" aria-label="최근 앱">
        <svg viewBox="0 0 50 56" className="h-14 w-[50px]" aria-hidden="true">
          <path d="M4 4V52M25 4V52M46 4V52" stroke="#a9a9a9" strokeWidth="6" strokeLinecap="round" />
        </svg>
      </button>
      <button type="button" aria-label="홈">
        <svg viewBox="0 0 58 58" className="size-[58px]" aria-hidden="true">
          <rect x="4" y="4" width="50" height="50" rx="16" fill="none" stroke="#a9a9a9" strokeWidth="7" />
        </svg>
      </button>
      <button type="button" aria-label="뒤로 가기">
        <svg viewBox="0 0 34 56" className="h-14 w-[34px]" aria-hidden="true">
          <path d="M30 5L5 28L30 51" fill="none" stroke="#a9a9a9" strokeWidth="7" strokeLinecap="round" />
        </svg>
      </button>
    </nav>
  );
}

export default function App() {
  return (
    <div className="relative bg-black font-['Roboto','Noto_Sans_CJK_KR',sans-serif]">
      <StatusBar />
      <AppBar />

      <div className="flex items-start justify-between pt-[26px] pr-[90px] pb-[53px] pl-[84px] text-[55px] leading-[79px]">
        <div>
          <p className="text-[#fafafa]">6월 7일 (수)</p>
          <p className="text-[56px] text-[#999999]">19:26 - 19:55</p>
        </div>
        <div className="pt-[22px]">
          <TrophyIcon />
        </div>
      </div>

      <section className="rounded-t-[104px] bg-[#171717] pt-[160px] pb-[176px] font-medium text-[#fafafa]">
        <p className="flex items-baseline justify-center gap-[14px] text-[112px] leading-[130px]">
          5.18<span className="text-[48px] leading-none">km</span>
        </p>
        <div className="mt-[14px] flex h-20 items-center justify-center gap-7 text-[63px] leading-[80px]">
          <span>00:26:32</span>
          <span className="h-[50px] w-px bg-[#444444]" />
          <span>
            05'06"<span className="ml-3 text-[44px]">/km</span>
          </span>
        </div>
      </section>

      <MapCard />
      <div className="h-[70px]" />
      <ChartCard />
      <NavigationBar />

      <div className="pointer-events-none absolute top-[245px] bottom-[232px] left-0 w-[14px] rounded-tr-full rounded-br-full bg-white/14" />
      <div className="pointer-events-none absolute top-[245px] right-0 bottom-[232px] w-[14px] rounded-tl-full rounded-bl-full bg-white/14" />
    </div>
  );
}
